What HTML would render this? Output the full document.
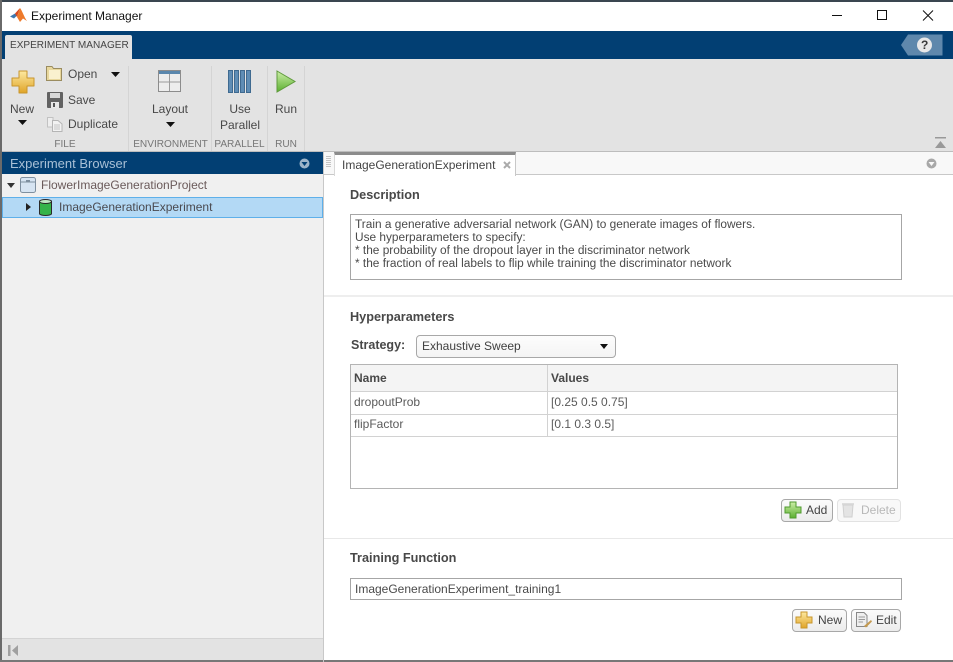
<!DOCTYPE html>
<html><head><meta charset="utf-8"><style>
html,body{margin:0;padding:0;width:953px;height:662px;overflow:hidden;background:#fff}
body{position:relative;font-family:"Liberation Sans",sans-serif;font-size:12px;color:#3c3c3c}
.a{position:absolute}
.t{position:absolute;white-space:nowrap;line-height:14px}
.r{color:#484848;font-size:12px}
.g{color:#767676;font-size:10.1px;top:138px}
.c{transform:translateX(-50%)}
.b{font-weight:bold;color:#484848;font-size:12.7px}
.sep{position:absolute;top:66px;height:85px;width:1px;background:#d4d4d4}
.btn{position:absolute;box-sizing:border-box;border:1px solid #a8a8a8;border-radius:4px;background:linear-gradient(#fbfbfb,#ececec);height:23px}
svg{position:absolute;overflow:visible}
</style></head><body>
<div class="a" style="left:0;top:0;width:953px;height:2px;background:#3a4650"></div>
<div class="a" style="left:0;top:0;width:2px;height:662px;background:#6a6a6a"></div>
<div class="a" style="left:0;top:660px;width:953px;height:2px;background:#777"></div>
<div class="a" style="left:2px;top:2px;width:951px;height:29px;background:#fff"></div>
<svg style="left:10px;top:8px" width="17" height="15" viewBox="0 0 17 15"><path d="M0 8.500L5 5.500 7 7.500 4 10.500Z" fill="#3f78ad"/><path d="M5 5.500L10 0 7 9Z" fill="#d8481e"/><path d="M10 0C12 2 14 9 17 13L13 10.500 10 14 7 9Z" fill="#ee7a2a"/></svg>
<div class="t" style="left:31px;top:9px;color:#111;font-size:12px">Experiment Manager</div>
<svg style="left:832px;top:10px" width="110" height="12" viewBox="0 0 110 12" fill="none" stroke="#111" stroke-width="1"><path d="M0 5.500H10"/><rect x="45.500" y="0.500" width="9" height="9"/><path d="M91 0.500L101 10.500M101 0.500L91 10.500"/></svg>

<div class="a" style="left:2px;top:31px;width:951px;height:28px;background:#023f73"></div>
<div class="a" style="left:5px;top:35px;width:127px;height:24px;background:#e3e3e3;border-radius:2px 2px 0 0"></div>
<div class="t" style="left:10px;top:39px;font-size:10.05px;color:#444">EXPERIMENT MANAGER</div>
<svg style="left:900px;top:34px" width="44" height="22" viewBox="0 0 44 22"><path d="M8 0.500H42.500V21.500H8L1 11Z" fill="#5f88ac"/><circle cx="24.500" cy="11" r="7.500" fill="#e8e8e8"/></svg>
<div class="t" style="left:921px;top:38px;font-size:12px;font-weight:bold;color:#3a3a3a">?</div>

<div class="a" style="left:2px;top:59px;width:951px;height:92px;background:#e3e3e3"></div>
<svg style="left:11px;top:70px" width="24" height="24" viewBox="0 0 24 24"><defs><linearGradient id="y" x1="0" y1="0" x2="0" y2="1"><stop offset="0" stop-color="#fde9a0"/><stop offset="1" stop-color="#e0a428"/></linearGradient><linearGradient id="gr" x1="0" y1="0" x2="0" y2="1"><stop offset="0" stop-color="#cdeea8"/><stop offset="1" stop-color="#5bb030"/></linearGradient></defs><path d="M8 1H16V8H23V16H16V23H8V16H1V8H8Z" fill="url(#y)" stroke="#c8962c" stroke-linejoin="round"/></svg>
<div class="t r c" style="left:22px;top:102px">New</div>
<svg style="left:18px;top:120px" width="9" height="5"><path d="M0 0H9L4.500 5Z" fill="#111"/></svg>
<svg style="left:46px;top:66px" width="16" height="15" viewBox="0 0 16 15"><path d="M0.500 0.500H6L7.500 2.500H15.500V14.500H0.500Z" fill="#e8d79c" stroke="#9a8c60"/><path d="M3 4H14V13H3Z" fill="#faf1cf"/></svg>
<div class="t r" style="left:68px;top:67px">Open</div>
<svg style="left:111px;top:72px" width="9" height="5"><path d="M0 0H9L4.500 5Z" fill="#111"/></svg>
<svg style="left:47px;top:92px" width="16" height="16" viewBox="0 0 16 16"><rect width="16" height="16" rx="1" fill="#626262"/><rect x="3" y="1" width="10" height="5" fill="#d8d8d8"/><rect x="4" y="10" width="8" height="6" fill="#e8e8e8"/><rect x="6" y="11" width="2" height="4" fill="#555"/></svg>
<div class="t r" style="left:68px;top:93px">Save</div>
<svg style="left:47px;top:117px" width="16" height="15" viewBox="0 0 16 15"><path d="M0.500 0.500H6V10H0.500Z" fill="#eee" stroke="#c2c2c2"/><path d="M5.500 3.500H11L15 7V14.500H5.500Z" fill="#f2f2f2" stroke="#b5b5b5"/><path d="M7 8H13M7 10H13M7 12H13" stroke="#c4c4c4"/></svg>
<div class="t r" style="left:68px;top:117px">Duplicate</div>
<div class="t g c" style="left:65px">FILE</div>
<div class="sep" style="left:128px"></div>

<svg style="left:158px;top:70px" width="23" height="22" viewBox="0 0 23 22"><rect x="0.500" y="0.500" width="22" height="21" fill="#ededed" stroke="#8c8c8c"/><rect x="1" y="1" width="21" height="3" fill="#5a87ad"/><path d="M1 12H22M11.500 4V21" stroke="#9c9c9c"/></svg>
<div class="t r c" style="left:170px;top:102px">Layout</div>
<svg style="left:166px;top:122px" width="9" height="5"><path d="M0 0H9L4.500 5Z" fill="#111"/></svg>
<div class="t g c" style="left:170.500px">ENVIRONMENT</div>
<div class="sep" style="left:211px"></div>

<svg style="left:228px;top:70px" width="23" height="23" viewBox="0 0 23 23"><g fill="#5f8db5" stroke="#3f6a90"><rect x="0.500" y="0.500" width="4" height="22"/><rect x="6.500" y="0.500" width="4" height="22"/><rect x="12.500" y="0.500" width="4" height="22"/><rect x="18.500" y="0.500" width="4" height="22"/></g></svg>
<div class="t r c" style="left:240px;top:102px">Use</div>
<div class="t r c" style="left:240px;top:118px">Parallel</div>
<div class="t g c" style="left:239.500px">PARALLEL</div>
<div class="sep" style="left:267px"></div>

<svg style="left:276px;top:70px" width="20" height="23" viewBox="0 0 20 23"><path d="M1 1L19 11.500 1 22Z" fill="url(#gr)" stroke="#5f9a3c"/></svg>
<div class="t r c" style="left:286px;top:102px">Run</div>
<div class="t g c" style="left:286px">RUN</div>
<div class="sep" style="left:304px"></div>

<svg style="left:935px;top:137px" width="11" height="12"><rect width="11" height="1.500" fill="#999"/><path d="M5.500 4L11 11H0Z" fill="#999"/></svg>

<div class="a" style="left:2px;top:151px;width:951px;height:1px;background:#bdbdbd"></div>
<div class="a" style="left:2px;top:152px;width:321px;height:22px;background:#023f73"></div>
<div class="t" style="left:10px;top:157px;font-size:13px;color:#a9c0d6">Experiment Browser</div>
<svg style="left:299px;top:158px" width="11" height="11" viewBox="0 0 11 11"><circle cx="5.500" cy="5.500" r="5" fill="#9db4c9"/><path d="M2.500 4H8.500L5.500 8Z" fill="#023f73"/></svg>
<div class="a" style="left:2px;top:174px;width:321px;height:464px;background:#f0f0f0"></div>
<div class="a" style="left:323px;top:152px;width:1px;height:510px;background:#c8c8c8"></div>
<div class="a" style="left:2px;top:638px;width:321px;height:22px;background:#e3e3e3;border-top:1px solid #d4d4d4;box-sizing:border-box"></div>
<svg style="left:8px;top:645px" width="11" height="11"><rect width="2.500" height="11" fill="#a0a0a0"/><path d="M10 0V11L4 5.500Z" fill="#a0a0a0"/></svg>

<svg style="left:7px;top:183px" width="8" height="5"><path d="M0 0H8L4 5Z" fill="#333"/></svg>
<svg style="left:20px;top:177px" width="16" height="16" viewBox="0 0 16 16"><rect x="0.500" y="0.500" width="15" height="15" rx="2" fill="#d6e4f2" stroke="#7e8f9f"/><path d="M1 5H15" stroke="#7e8f9f"/><rect x="6" y="3" width="4" height="2" fill="#7e8f9f"/></svg>
<div class="t" style="left:41px;top:178px;font-size:12px;color:#6a5a5a">FlowerImageGenerationProject</div>
<div class="a" style="left:2px;top:197px;width:321px;height:21px;box-sizing:border-box;background:#b3d9f5;border:1px solid #5eb0ea"></div>
<svg style="left:26px;top:203px" width="5" height="8"><path d="M0 0L5 4 0 8Z" fill="#222"/></svg>
<svg style="left:38px;top:199px" width="15" height="17" viewBox="0 0 15 17"><path d="M1.500 2V15C4 17 11 17 13.500 15V2Z" fill="#35b34a" stroke="#2a2a2a"/><ellipse cx="7.500" cy="2.500" rx="6" ry="2" fill="#bfe8c4" stroke="#2a2a2a"/></svg>
<div class="t" style="left:59px;top:200px;font-size:12px;color:#4a4a50">ImageGenerationExperiment</div>

<div class="a" style="left:324px;top:152px;width:629px;height:23px;background:#f8f8f8;box-sizing:border-box;border-bottom:1px solid #c8c8c8"></div>
<div class="a" style="left:326px;top:156px;width:5px;height:11px;background:repeating-linear-gradient(#c4c4c4 0 1px,#f8f8f8 1px 2px)"></div>
<div class="a" style="left:334px;top:152px;width:182px;height:24px;background:#fff;box-sizing:border-box;border-top:3px solid #8c8c8c;border-right:1px solid #c8c8c8;border-left:1px solid #d8d8d8"></div>
<div class="t" style="left:342px;top:158px;font-size:12px;color:#444">ImageGenerationExperiment</div>
<svg style="left:503px;top:161px" width="8" height="8"><path d="M1 1L7 7M7 1L1 7" stroke="#aaa" stroke-width="2"/></svg>
<svg style="left:926px;top:158px" width="11" height="11" viewBox="0 0 11 11"><circle cx="5.500" cy="5.500" r="5" fill="#a8a8a8"/><path d="M2.500 4H8.500L5.500 8Z" fill="#f8f8f8"/></svg>

<div class="t b" style="left:350px;top:188px">Description</div>
<div class="a" style="left:350px;top:214px;width:552px;height:66px;box-sizing:border-box;border:1px solid #a6a6a6;background:#fff"></div>
<div class="t" style="left:355px;top:218px;font-size:11.87px;line-height:13px;color:#4a4a4a;white-space:pre">Train a generative adversarial network (GAN) to generate images of flowers.
Use hyperparameters to specify:
* the probability of the dropout layer in the discriminator network
* the fraction of real labels to flip while training the discriminator network</div>
<div class="a" style="left:324px;top:295px;width:629px;height:2px;background:#eee"></div>

<div class="t b" style="left:350px;top:310px">Hyperparameters</div>
<div class="t b" style="left:351px;top:338px;font-size:12.5px">Strategy:</div>
<div class="btn" style="left:416px;top:335px;width:200px;background:linear-gradient(#fdfdfd,#f4f4f4)"></div>
<div class="t" style="left:422px;top:339px;font-size:12px;color:#404040">Exhaustive Sweep</div>
<svg style="left:600px;top:344px" width="8" height="5"><path d="M0 0H8L4 5Z" fill="#111"/></svg>

<div class="a" style="left:350px;top:364px;width:548px;height:125px;box-sizing:border-box;border:1px solid #b4b4b4;background:#fff"></div>
<div class="a" style="left:351px;top:365px;width:546px;height:26px;background:#f4f4f4;border-bottom:1px solid #d2d2d2"></div>
<div class="a" style="left:351px;top:414px;width:546px;height:1px;background:#d2d2d2"></div>
<div class="a" style="left:351px;top:436px;width:546px;height:1px;background:#d2d2d2"></div>
<div class="a" style="left:547px;top:365px;width:1px;height:72px;background:#d2d2d2"></div>
<div class="t" style="left:354px;top:371px;font-weight:bold;font-size:12px;color:#484848">Name</div>
<div class="t" style="left:551px;top:371px;font-weight:bold;font-size:12px;color:#484848">Values</div>
<div class="t" style="left:354px;top:395px;color:#5a5a5a">dropoutProb</div>
<div class="t" style="left:551px;top:395px;color:#5a5a5a">[0.25 0.5 0.75]</div>
<div class="t" style="left:354px;top:417px;color:#5a5a5a">flipFactor</div>
<div class="t" style="left:551px;top:417px;color:#5a5a5a">[0.1 0.3 0.5]</div>

<div class="btn" style="left:781px;top:499px;width:52px"></div>
<svg style="left:784px;top:501px" width="18" height="18" viewBox="0 0 18 18"><path d="M6 1H12V6H17V12H12V17H6V12H1V6H6Z" fill="url(#gr)" stroke="#4f9a2e"/></svg>
<div class="t" style="left:806px;top:503px;color:#444">Add</div>
<div class="btn" style="left:837px;top:499px;width:64px;border-color:#e2e2e2;background:#f8f8f8"></div>
<svg style="left:841px;top:501px" width="14" height="17" viewBox="0 0 14 17"><path d="M1 2H13V4H1Z" fill="#ddd"/><path d="M2 4H12L11 16H3Z" fill="#e4e4e4" stroke="#d0d0d0"/></svg>
<div class="t" style="left:861px;top:503px;color:#b8b8b8">Delete</div>
<div class="a" style="left:324px;top:538px;width:629px;height:1px;background:#e8e8e8"></div>

<div class="t b" style="left:350px;top:551px">Training Function</div>
<div class="a" style="left:350px;top:578px;width:552px;height:22px;box-sizing:border-box;border:1px solid #a6a6a6;background:#fff"></div>
<div class="t" style="left:355px;top:582px;color:#4a4a4a">ImageGenerationExperiment_training1</div>
<div class="btn" style="left:792px;top:609px;width:55px"></div>
<svg style="left:795px;top:611px" width="18" height="18" viewBox="0 0 18 18"><path d="M6 1H12V6H17V12H12V17H6V12H1V6H6Z" fill="url(#y)" stroke="#c8962c"/></svg>
<div class="t" style="left:818px;top:613px;color:#444">New</div>
<div class="btn" style="left:851px;top:609px;width:50px"></div>
<svg style="left:855px;top:611px" width="18" height="18" viewBox="0 0 18 18"><path d="M1.500 1.500H9L12 4.500V15.500H1.500Z" fill="#eee" stroke="#888"/><path d="M3.500 6H10M3.500 8.500H10M3.500 11H8" stroke="#999"/><path d="M9 15L16 9 17 10.500 11 16.500Z" fill="#c49a50"/></svg>
<div class="t" style="left:876px;top:613px;color:#444">Edit</div>
</body></html>
